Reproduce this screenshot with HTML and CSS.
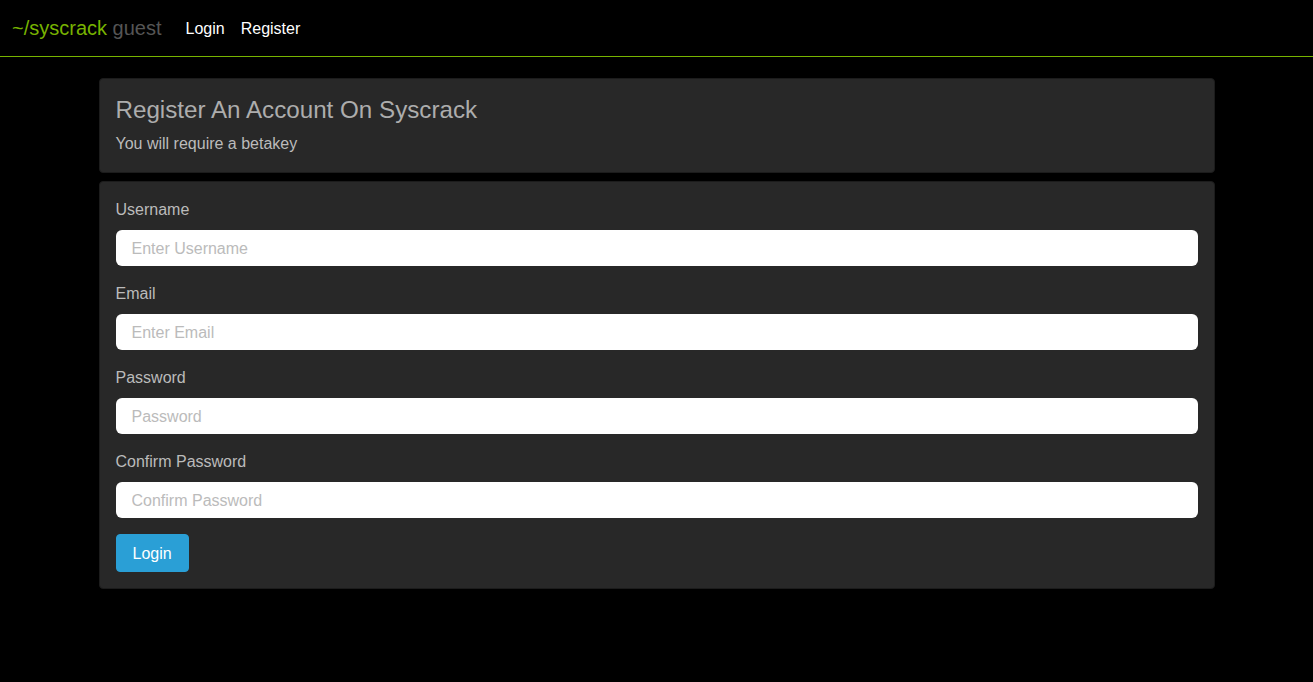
FILE: index.html
```html
<!DOCTYPE html>
<html lang="en">
<head>
<meta charset="utf-8">
<title>Register - Syscrack</title>
<link rel="stylesheet" href="styles.css">
</head>
<body>
<nav class="navbar">
  <a class="brand" href="#"><span class="brand-name">~/syscrack</span> <span class="brand-user">guest</span></a>
  <ul class="nav-links">
    <li><a href="#">Login</a></li>
    <li><a href="#">Register</a></li>
  </ul>
</nav>
<main class="container">
  <section class="panel header-panel">
    <h1 class="title">Register An Account On Syscrack</h1>
    <p class="subtitle">You will require a betakey</p>
  </section>
  <section class="panel form-panel">
    <form class="form">
      <div class="group">
        <label for="username">Username</label>
        <input id="username" type="text" placeholder="Enter Username">
      </div>
      <div class="group">
        <label for="email">Email</label>
        <input id="email" type="email" placeholder="Enter Email">
      </div>
      <div class="group">
        <label for="password">Password</label>
        <input id="password" type="password" placeholder="Password">
      </div>
      <div class="group">
        <label for="confirm">Confirm Password</label>
        <input id="confirm" type="password" placeholder="Confirm Password">
      </div>
      <button type="submit" class="btn">Login</button>
    </form>
  </section>
</main>
</body>
</html>
```

FILE: styles.css
```css
* { box-sizing: border-box; }
html, body { margin: 0; padding: 0; }
body {
  background: #000;
  font-family: "Liberation Sans", Arial, sans-serif;
  font-size: 16px;
  color: #bbb;
}
a { text-decoration: none; }

.navbar {
  height: 57px;
  border-bottom: 1px solid #77b300;
  display: flex;
  align-items: center;
  padding: 0 12px;
}
.brand {
  font-size: 20px;
  line-height: 24px;
  margin-right: 24px;
}
.brand-name { color: #77b300; }
.brand-user { color: #555; }
.nav-links {
  list-style: none;
  display: flex;
  gap: 16px;
  margin: 2px 0 0;
  padding: 0;
}
.nav-links a {
  color: #fff;
  font-size: 16px;
  line-height: 24px;
}

.container {
  width: 1116px;
  margin: 21px auto 0;
  display: flex;
  flex-direction: column;
  gap: 8px;
}
.panel {
  background: #282828;
  border: 1px solid #1c1c1c;
  border-radius: 4px;
  padding: 16px;
}
.header-panel { padding-top: 17px; }
.title {
  margin: 0 0 8px;
  font-size: 24.2px;
  font-weight: normal;
  line-height: 28px;
  color: #adadad;
}
.subtitle {
  margin: 0;
  line-height: 24px;
  color: #bbb;
}
.form { margin: 0; }
.group {
  display: flex;
  flex-direction: column;
  margin-bottom: 16px;
}
.group label {
  line-height: 22px;
  padding-top: 1px;
  margin-bottom: 9px;
  color: #bbb;
}
.group input {
  height: 36px;
  border: none;
  border-radius: 6px;
  background: #fff;
  padding: 2px 16px 0;
  font-family: inherit;
  font-size: 16px;
  color: #333;
  outline: none;
}
.group input::placeholder { color: #bbb; }
.btn {
  height: 38px;
  padding: 8px 16px 6px;
  border: 1px solid #2a9fd6;
  border-radius: 4px;
  background: #2a9fd6;
  color: #fff;
  font-family: inherit;
  font-size: 16px;
  line-height: 22px;
  cursor: pointer;
}
```
